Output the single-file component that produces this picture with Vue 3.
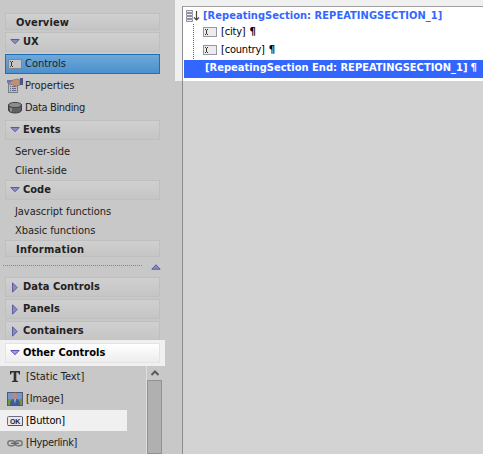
<script setup>
const topItems = [
  { text: 'Overview', kind: 'head', cls: 'short' },
  { text: 'UX', kind: 'head', arrow: 'down' },
  { text: 'Controls', kind: 'item', icon: 'field', cls: 'active' },
  { text: 'Properties', kind: 'item', icon: 'props' },
  { text: 'Data Binding', kind: 'item', icon: 'db', cls: 'tight' },
  { text: 'Events', kind: 'head', arrow: 'down', cls: 'flush' },
  { text: 'Server-side', kind: 'sub', cls: 'first' },
  { text: 'Client-side', kind: 'sub' },
  { text: 'Code', kind: 'head', arrow: 'down', cls: 'flush' },
  { text: 'Javascript functions', kind: 'sub', cls: 'first' },
  { text: 'Xbasic functions', kind: 'sub' },
  { text: 'Information', kind: 'head', cls: 'info' },
]
const groups = ['Data Controls', 'Panels', 'Containers']
const controls = [
  { text: '[Static Text]', icon: 'text' },
  { text: '[Image]', icon: 'image' },
  { text: '[Button]', icon: 'ok' },
  { text: '[Hyperlink]', icon: 'link' },
]
</script>

<template>
  <div class="app">
    <aside class="side">
      <nav class="top">
        <div v-for="i in topItems" :key="i.text" :class="[i.kind, i.cls]">
          <svg v-if="i.arrow" class="tri" width="10" height="6" viewBox="0 0 10 6"><path d="M.8.5h8.4L5 4.8z" fill="#8b8bc4" stroke="#5b5b9b" /></svg>
          <svg v-if="i.icon === 'field'" class="ico" width="16" height="16" viewBox="0 0 16 16">
            <rect x="1.5" y="3.500" width="13" height="9" fill="#c4c4c4" stroke="#858591" />
            <path d="M3 5.500h1m1 0h1M4.500 6v4M3 10.500h1m1 0h1" stroke="#333" />
          </svg>
          <svg v-if="i.icon === 'props'" class="ico" width="16" height="16" viewBox="0 0 16 16">
            <rect x="1.500" y="3.500" width="9" height="11" fill="#b9bdc5" stroke="#777f8b" />
            <rect x="0" y="2" width="7" height="3" fill="#6879b6" />
            <path d="M3 8.500h1m1 0h4M3 10.500h1m1 0h4M3 12.500h1m1 0h4" stroke="#626b88" />
            <path d="M2 5L6 2l5-1 2 1v5l-3 1-3 0-1-2-3 1z" fill="#c18f76" stroke="#966c5a" stroke-width=".7" />
            <rect x="13" y="0" width="3" height="7" fill="#4b5688" />
          </svg>
          <svg v-if="i.icon === 'db'" class="ico" width="16" height="16" viewBox="0 0 16 16">
            <path d="M1.500 5v5c0 4 13 4 13 0V5z" fill="#616161" stroke="#3f3f3f" />
            <path d="M4 7.500v4" stroke="#8c8c8c" stroke-width="2" />
            <ellipse cx="8" cy="5" rx="6.500" ry="2.600" fill="#8d8d8d" stroke="#444" />
          </svg>
          <span>{{ i.text }}</span>
        </div>
      </nav>
      <div class="splitter">
        <i></i>
        <svg width="10" height="6" viewBox="0 0 10 6"><path d="M.8 5.200h8.400L5 .8z" fill="#8b8bc4" stroke="#5b5b9b" /></svg>
      </div>
      <div class="groups">
        <div v-for="g in groups" :key="g" class="head">
          <svg class="tri right" width="6" height="11" viewBox="0 0 6 11"><path d="M.5.8v9.400L5.200 5.500z" fill="#8b8bc4" stroke="#5b5b9b" /></svg>
          <span>{{ g }}</span>
        </div>
      </div>
      <div class="spot">
        <div class="head">
          <svg class="tri" width="10" height="6" viewBox="0 0 10 6"><path d="M.8.5h8.400L5 4.800z" fill="#9a9af0" stroke="#5858b8" /></svg>
          <span>Other Controls</span>
        </div>
      </div>
      <div class="listwrap">
        <div class="list">
          <div v-for="c in controls" :key="c.text" class="control" :class="c.icon">
            <svg class="ico" width="16" height="16" viewBox="0 0 16 16">
              <path v-if="c.icon === 'text'" d="M3 2h10v3.500h-1L11.200 3.500H9.300v8l1.900.7v.8H4.800v-.8l1.900-.7v-8H4.800L4 5.500H3z" fill="#303030" />
              <g v-else-if="c.icon === 'image'">
                <rect x=".5" y="1.500" width="15" height="13" fill="#7995cb" stroke="#4e5b72" />
                <path d="M1 8h14v6H1z" fill="#6c9a3d" />
                <path d="M3 14c0-5 2-6 5-6s5 1 5 6z" fill="#405b99" />
                <path d="M7 8h2l-1 5z" fill="#a9b9d5" />
                <ellipse cx="8" cy="5" rx="2.400" ry="3.200" fill="#b58c76" />
              </g>
              <g v-else-if="c.icon === 'ok'">
                <rect x=".5" y="3.500" width="15" height="9" rx="1" fill="#e7e7ed" stroke="#6c6c88" />
                <path d="M1 12.500h14.500V4" fill="none" stroke="#4f4f6b" />
                <text x="8" y="10.900" text-anchor="middle" textLength="10" class="oktext">OK</text>
              </g>
              <g v-else fill="none" stroke="#777" stroke-width="1.400">
                <rect x=".8" y="5.800" width="7" height="5" rx="2.500" />
                <rect x="8.200" y="5.800" width="7" height="5" rx="2.500" />
                <path d="M4 8.300h8" stroke="#666" />
              </g>
            </svg>
            <span>{{ c.text }}</span>
          </div>
        </div>
        <div class="scroll">
          <svg width="10" height="8" viewBox="0 0 10 8"><path d="M1.500 6L5 2.500 8.500 6" fill="none" stroke="#5a5a5a" stroke-width="2" /></svg>
          <div class="thumb"></div>
        </div>
      </div>
    </aside>
    <main class="stage">
      <div class="tree">
        <div class="row start">
          <svg width="14" height="12" viewBox="0 0 14 12">
            <path d="M.5.500h6v2h-6zM.5 3.500h6v2h-6zM.5 6.500h6v2h-6zM.5 9.500h6v2h-6z" fill="#eee" stroke="#77778a" stroke-width=".8" />
            <path d="M10.500 1v9M8 7.500l2.500 2.500 2.500-2.500" fill="none" stroke="#444" stroke-width="1.200" />
          </svg>
          <b>[RepeatingSection: REPEATINGSECTION_1]</b>
        </div>
        <div v-for="f in ['city', 'country']" :key="f" class="row leaf">
          <svg width="14" height="10" viewBox="0 0 14 10">
            <rect x=".5" y=".5" width="13" height="9" fill="#ececec" stroke="#9696a5" />
            <path d="M2 2.500h1m1 0h1M3.500 3v4M2 7.500h1m1 0h1" stroke="#333" />
          </svg>
          <span>[{{ f }}]</span><em>¶</em>
        </div>
        <div class="row end"><b>[RepeatingSection End: REPEATINGSECTION_1]</b><em>¶</em></div>
        <svg class="guide" width="10" height="46" viewBox="0 0 10 46"><path d="M.5 0v45M0 44.500h9" fill="none" stroke="#6b6860" stroke-dasharray="1 1" /></svg>
        <div class="gap"></div>
        <div class="dim"></div>
      </div>
    </main>
  </div>
</template>

<style>
body { overflow: hidden; }
</style>
<style scoped>
* { box-sizing: border-box; }
.app { display: flex; width: 483px; height: 454px; overflow: hidden; background: #c8c8c8; font: 11px/14px "DejaVu Sans Condensed", "DejaVu Sans", sans-serif; font-stretch: condensed; letter-spacing: -.06px; color: #222; white-space: nowrap; }
.side { width: 175px; flex: none; }
.top { height: 244px; margin-top: 13px; padding-left: 5px; }
.head { display: flex; align-items: center; width: 155px; height: 20px; margin-bottom: 2px; padding: 0 0 0 4px; border: 1px solid #bfbfbf; background: linear-gradient(#d0d0d0, #c5c5c5); font-weight: bold; letter-spacing: .03px; }
.head.short { height: 17px; padding: 2px 0 0 10px; letter-spacing: .1px; }
.head.flush { margin-bottom: 0; }
.head.info { height: 17px; padding: 2px 0 0 10px; letter-spacing: .25px; }
.tri { flex: none; margin-right: 3px; }
.tri.right { margin: 0 5px 0 2px; }
.item { display: flex; align-items: center; width: 155px; height: 22px; padding: 0 0 2px 2px; }
.item.tight { letter-spacing: -.35px; }
.item.active { height: 20px; margin-bottom: 2px; padding: 0 0 1px 1px; border: 1px solid #1d70b7; background: linear-gradient(#70a7d6, #4a91cf); letter-spacing: 0; }
.ico { flex: none; margin-right: 2px; margin-top: 1px; }
.item:not(.active) .ico { margin-top: -1px; }
.sub { height: 19px; padding: 3px 0 0 10px; }
.sub.first { height: 21px; padding-top: 5px; }
.splitter { display: flex; align-items: flex-start; gap: 9px; height: 20px; padding: 7px 0 0 3px; }
.splitter i { width: 139px; height: 1px; margin-top: 1px; background: repeating-linear-gradient(90deg, #858585 0 1px, transparent 1px 2px); }
.groups { height: 63px; padding-left: 5px; overflow: hidden; }
.spot { width: 165px; height: 26px; padding: 3px 5px; background: #f0f0f0; color: #000; }
.spot .head { border-color: #e4e4e4; background: linear-gradient(#fff, #ededed); }
.listwrap { display: flex; height: 88px; }
.list { width: 146px; }
.control { display: flex; align-items: center; width: 127px; height: 22px; padding: 0 0 1px 7px; }
.control .ico { margin-right: 3px; }
.control.image { letter-spacing: -.2px; }
.control.ok { height: 21px; margin-bottom: 1px; padding-bottom: 0; background: #f0f0f0; color: #000; letter-spacing: -.25px; }
.control.link { letter-spacing: -.36px; }
.oktext { font: bold 7px "Liberation Sans", sans-serif; fill: #222; }
.scroll { display: flex; flex-direction: column; align-items: center; width: 16px; border-left: 1px solid #dedede; padding-top: 3px; }
.scroll svg { flex: none; }
.thumb { width: 15px; height: 80px; margin-top: 3px; border: 1px solid #929292; background: #b0b0b0; }
.stage { flex: 1; padding: 6px 0 0 7px; background: linear-gradient(#f0f0f0 81px, #c8c8c8 81px); }
.tree { position: relative; display: flex; flex-direction: column; height: 448px; border-top: 1px solid #a0a0a0; border-left: 1px solid #8d8d8d; background: #fff; color: #000; }
.row { display: flex; align-items: center; flex: none; margin-left: 1px; }
.row b { font-size: 11px; }
.start { height: 16px; padding: 1px 0 0 2px; color: #36f; letter-spacing: .05px; }
.start svg { margin: 1px 3px 0 0; }
.leaf { height: 18px; padding: 0 0 1px 19px; letter-spacing: -.2px; }
.leaf svg { margin: 1px 4px 0 0; }
.row em { margin-left: 4px; font-style: normal; font-weight: bold; }
.end { height: 18px; margin-top: 1px; padding: 0 0 3px 21px; background: #36f; color: #fff; letter-spacing: .02px; }
.end em { margin-left: 3px; }
.guide { position: absolute; left: 10px; top: 17px; }
.gap { height: 3px; flex: none; }
.dim { flex: 1; background: #d3d3d3; }
</style>
